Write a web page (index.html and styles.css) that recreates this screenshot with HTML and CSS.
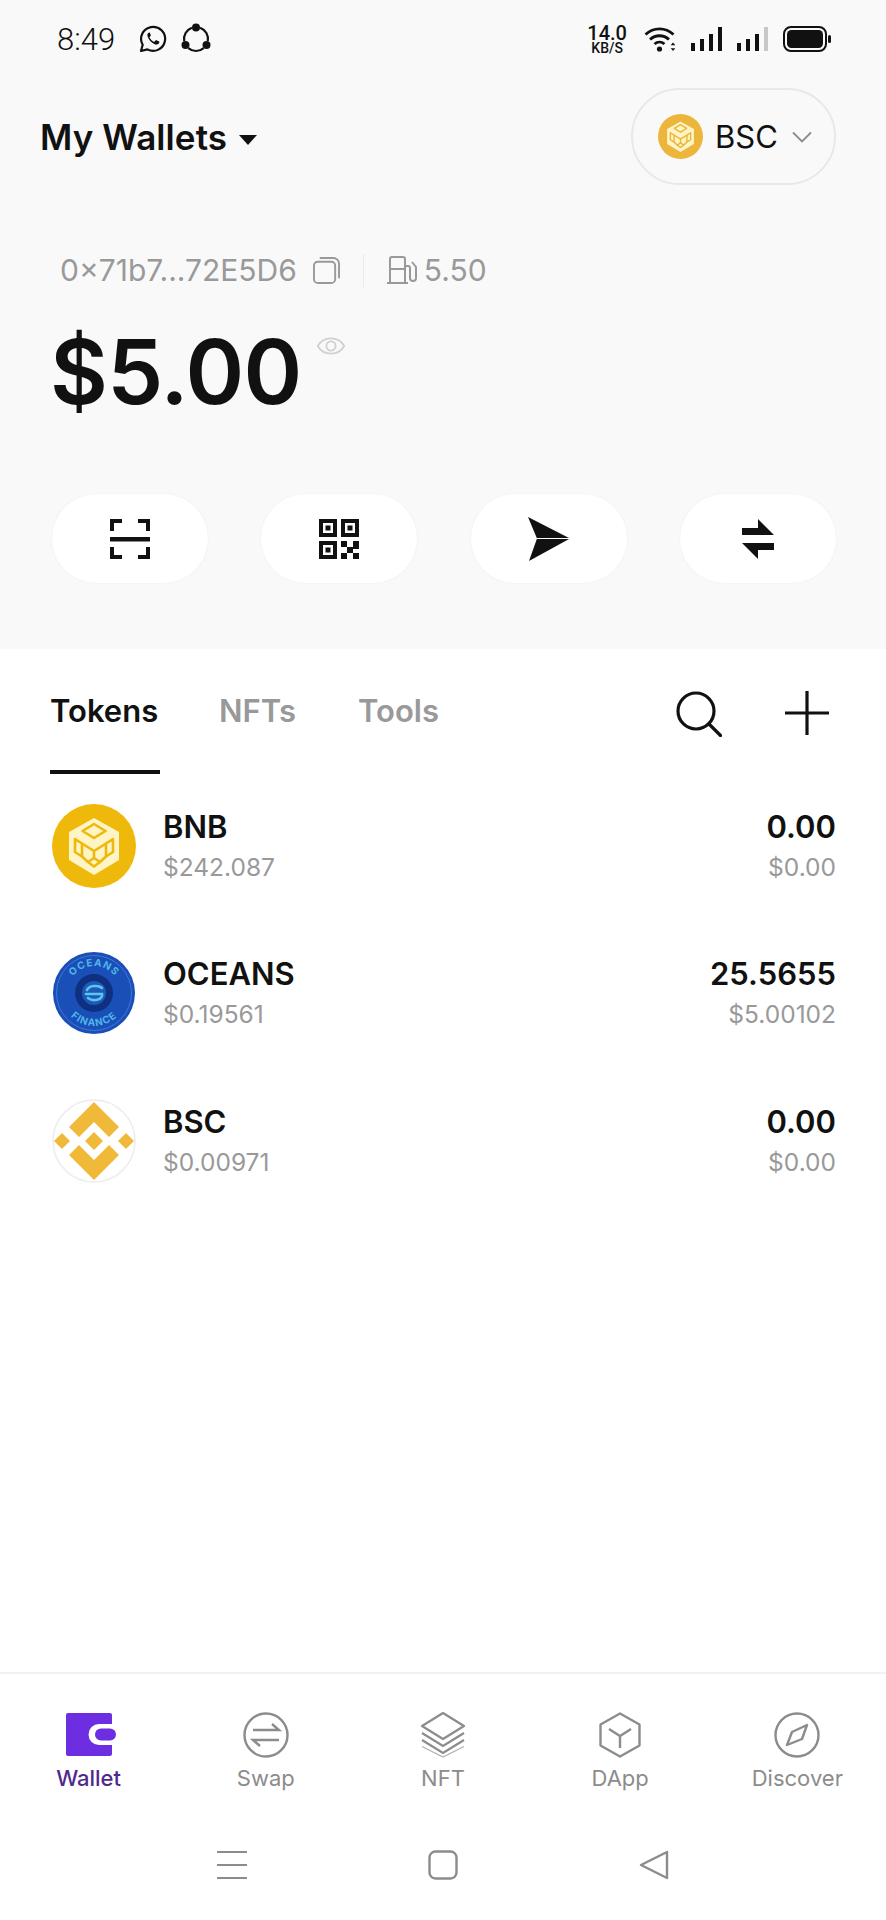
FILE: index.html
```html
<!DOCTYPE html>
<html>
<head>
    <meta charset="utf-8">
    <meta content="width=device-width, initial-scale=1" name="viewport">
    <title>My Wallets</title>
    <link rel="stylesheet" href="styles.css">
</head>
<body>
<div class="page">
    <div class="top">
        <div class="status">
            <div class="status-left">
                <span class="time">8:49</span>
                <svg class="ic-whatsapp" viewBox="0 0 28 28"><path d="M2 26l1.700-6.200A12 12 0 1 1 8.400 24.400z" fill="none" stroke="#111" stroke-width="2.200" stroke-linejoin="round"/><path d="M10 7.600c-1.400.6-2 2.200-1.400 4 1.200 3.600 4 6.400 7.600 7.800 1.800.6 3.400-.2 4-1.600.2-.6.2-1 0-1.200l-2.800-1.400c-.4-.2-.6 0-.8.200l-1 1.200c-.2.200-.4.200-.8.100-1.800-.8-3.400-2.400-4.200-4.200-.1-.3 0-.5.200-.7l.9-1.100c.2-.2.200-.5.100-.7L10.800 7.800c-.2-.3-.5-.3-.8-.2z" fill="#111"/></svg>
                <svg class="ic-share" viewBox="0 0 32 32"><path d="M20.100 4.700A12 12 0 0 1 27.800 18.100M23.700 25.200A12 12 0 0 1 8.300 25.200M4.200 18.100A12 12 0 0 1 11.900 4.700" fill="none" stroke="#111" stroke-width="2.200"/><circle cx="16" cy="4.500" r="4" fill="#111"/><circle cx="5.500" cy="22" r="4" fill="#111"/><circle cx="26.500" cy="22" r="4" fill="#111"/></svg>
            </div>
            <div class="status-right">
                <div class="speed"><span>14.0</span><span class="speed-unit">KB/S</span></div>
                <svg class="ic-wifi" viewBox="0 0 34 28"><path d="M1.500 9.500C9.500 2 21.500 2 29.500 9.500M6 14.500c5.500-5 13.500-5 19 0M10.500 19c3-2.500 7-2.500 10 0" fill="none" stroke="#111" stroke-width="2.800"/><circle cx="15.500" cy="24" r="2.600" fill="#111"/><path d="M29 17.500l2.300 2.800h-4.600zM29 26l2.300-2.800h-4.600z" fill="#111"/></svg>
                <svg class="ic-signal" viewBox="0 0 32 26"><rect x="0" y="17" width="4" height="8" fill="#111"/><rect x="9" y="13" width="4" height="12" fill="#111"/><rect x="18" y="8" width="4" height="17" fill="#111"/><rect x="27" y="1" width="4" height="24" fill="#111"/></svg>
                <svg class="ic-signal" viewBox="0 0 32 26"><rect x="0" y="17" width="4" height="8" fill="#111"/><rect x="9" y="13" width="4" height="12" fill="#111"/><rect x="18" y="8" width="4" height="17" fill="#111"/><rect x="27" y="1" width="4" height="24" fill="#c8c8c8"/></svg>
                <svg class="ic-battery" viewBox="0 0 48 26"><rect x="1" y="1" width="42" height="24" rx="7" fill="none" stroke="#111" stroke-width="2"/><rect x="4" y="4" width="36" height="18" rx="4.500" fill="#111"/><rect x="45" y="9" width="3" height="8" rx="1.500" fill="#111"/></svg>
            </div>
        </div>

        <div class="head">
            <div class="wallets">My Wallets <span class="caret"></span></div>
            <div class="chain">
                <svg class="chain-logo" viewBox="0 0 84 84"><use href="#bnb-logo"/></svg>
                <span>BSC</span>
                <svg class="chevron" viewBox="0 0 20 12"><path d="M1 1.500l9 9 9-9" fill="none" stroke="#8c8c8c" stroke-width="1.800"/></svg>
            </div>
        </div>

        <div class="address">
            <span>0×71b7...72E5D6</span>
            <svg class="ic-copy" viewBox="0 0 28 28"><rect x="1" y="5" width="22" height="22" rx="4" fill="none" stroke="#999" stroke-width="2"/><path d="M7 1h14a6 6 0 0 1 6 6v15" fill="none" stroke="#999" stroke-width="2"/></svg>
            <i class="address-line"></i>
            <svg class="ic-gas" viewBox="0 0 32 28"><path d="M3 27V3a2 2 0 0 1 2-2h11a2 2 0 0 1 2 2v24M0 27h21M3 13h15" fill="none" stroke="#999" stroke-width="2"/><path d="M18 10h3a2 2 0 0 1 2 2v10a3 3 0 0 0 6 0V11l-4-5" fill="none" stroke="#999" stroke-width="2"/></svg>
            <span class="gas">5.50</span>
        </div>

        <div class="balance">
            <span>$5.00</span>
            <svg class="ic-eye" viewBox="0 0 32 24"><path d="M1.500 12C8 1 24 1 30.500 12 24 23 8 23 1.500 12z" fill="none" stroke="#d0d0d0" stroke-width="2"/><circle cx="16" cy="12" r="5" fill="none" stroke="#d0d0d0" stroke-width="2"/></svg>
        </div>

        <div class="actions">
            <div class="action">
                <svg viewBox="0 0 40 40"><path d="M2 12V2h10M28 2h10v10M2 28v10h10M28 38h10V28" fill="none" stroke="#111" stroke-width="4"/><rect x="0" y="18" width="40" height="4.500" fill="#111"/></svg>
            </div>
            <div class="action">
                <svg viewBox="0 0 40 40"><path fill="#111" fill-rule="evenodd" d="M0 0h18v18H0zM4 4v10h10V4zM22 0h18v18H22zM26 4v10h10V4zM0 22h18v18H0zM4 26v10h10V26z"/><rect x="6.500" y="6.500" width="5" height="5" fill="#111"/><rect x="28.500" y="6.500" width="5" height="5" fill="#111"/><rect x="6.500" y="28.500" width="5" height="5" fill="#111"/><path fill="#111" d="M22 22h6v6h-6zM34 22h6v8h-6zM28 28h6v6h-6zM22 34h6v6h-6zM34 34h6v6h-6z"/></svg>
            </div>
            <div class="action">
                <svg class="ic-send" viewBox="0 0 44 46"><path d="M1 1l42 21.500L2 45l8-22.500z" fill="#111"/><path d="M10 22.500h33" stroke="#fff" stroke-width="1"/></svg>
            </div>
            <div class="action">
                <svg class="ic-swap" viewBox="0 0 34 40"><path fill="#111" d="M17 0l16 16H1V9h16zM33 24v7H17v9L1 24z"/></svg>
            </div>
        </div>
    </div>

    <div class="tabs">
        <div class="tab active">Tokens</div>
        <div class="tab">NFTs</div>
        <div class="tab">Tools</div>
        <div class="tab-tools">
            <svg class="ic-search" viewBox="0 0 46 46"><circle cx="20" cy="20" r="18" fill="none" stroke="#111" stroke-width="3.200"/><path d="M33 33l11.500 11.500" stroke="#111" stroke-width="3.200" stroke-linecap="round"/></svg>
            <svg class="ic-plus" viewBox="0 0 44 44"><path d="M22 0v44M0 22h44" stroke="#111" stroke-width="3.200"/></svg>
        </div>
    </div>

    <ul class="tokens">
        <li>
            <svg class="token-logo" viewBox="0 0 84 84">
                <g id="bnb-logo">
                    <circle class="bnb-disc" cx="42" cy="42" r="42"/>
                    <path d="M42 14l25 14v28L42 71 17 56V28z" fill="#fff4c4"/>
                    <g class="bnb-lines" fill="none" stroke-width="2.600" stroke-linejoin="round">
                        <path d="M42 20l11.500 7L42 34l-11.500-7z"/>
                        <path d="M23 35l7 4.500v13L23 48zM61 35l-7 4.500v13L61 48z"/>
                        <path d="M42 54l6 4-6 4.500-6-4.500z"/>
                        <path d="M30 39.500l12 7.500 12-7.500M42 47v7M30 52.500l6 5.500M54 52.500l-6 5.500"/>
                    </g>
                </g>
            </svg>
            <div class="token-name"><b>BNB</b><span>$242.087</span></div>
            <div class="token-value"><b>0.00</b><span>$0.00</span></div>
        </li>
        <li>
            <svg class="token-logo" viewBox="0 0 84 84">
                <defs>
                    <path id="arc-top" d="M15 42a27 27 0 0 1 54 0"/>
                    <path id="arc-bottom" d="M9 42a33 33 0 0 0 66 0"/>
                </defs>
                <circle cx="42" cy="42" r="41" fill="#1a4fb8"/>
                <circle cx="42" cy="42" r="37.500" fill="none" stroke="#3f78d8" stroke-width="1"/>
                <circle cx="42" cy="42" r="19" fill="#0f2f80"/>
                <circle cx="42" cy="42" r="12" fill="#1d5ab8"/>
                <g fill="none" stroke="#5cc4ee" stroke-width="2.600" stroke-linecap="round">
                    <path d="M35 39c2-5 12-5 15-2M34 43h16c1 6-9 8-14 4"/>
                </g>
                <text class="coin-text"><textPath href="#arc-top" startOffset="50%">OCEANS</textPath></text>
                <text class="coin-text"><textPath href="#arc-bottom" startOffset="50%">FINANCE</textPath></text>
            </svg>
            <div class="token-name"><b>OCEANS</b><span>$0.19561</span></div>
            <div class="token-value"><b>25.5655</b><span>$5.00102</span></div>
        </li>
        <li>
            <svg class="token-logo" viewBox="0 0 84 84">
                <circle cx="42" cy="42" r="41" fill="#fff" stroke="#ececec" stroke-width="1.500"/>
                <path fill="#f0b93a" d="M42 3L67 28 57 38 42 23 27 38 17 28zM42 81L17 56 27 46 42 61 57 46 67 56zM33 42l9-9 9 9-9 9zM2 42l8-8 8 8-8 8zM66 42l8-8 8 8-8 8z"/>
            </svg>
            <div class="token-name"><b>BSC</b><span>$0.00971</span></div>
            <div class="token-value"><b>0.00</b><span>$0.00</span></div>
        </li>
    </ul>

    <div class="nav">
        <div class="nav-item active">
            <svg viewBox="0 0 50 43"><path fill="#6c2ee0" d="M2 0h42a2 2 0 0 1 2 2v9H33a10.500 10.500 0 0 0 0 21h13v9a2 2 0 0 1-2 2H2a2 2 0 0 1-2-2V2a2 2 0 0 1 2-2z"/><rect x="29" y="15.500" width="21" height="12" rx="6" fill="#6c2ee0"/></svg>
            <span>Wallet</span>
        </div>
        <div class="nav-item">
            <svg viewBox="0 0 46 46"><circle cx="23" cy="23" r="21.500" fill="none" stroke="#8c8c8c" stroke-width="2.400"/><path d="M10 18h26l-7-6M36 28H10l7 6" fill="none" stroke="#8c8c8c" stroke-width="2.400"/></svg>
            <span>Swap</span>
        </div>
        <div class="nav-item">
            <svg viewBox="0 0 46 46"><path d="M23 1l21 13-21 13L2 14z" fill="none" stroke="#8c8c8c" stroke-width="2.200" stroke-linejoin="round"/><path d="M2 21l21 13 21-13M2 28l21 13 21-13" fill="none" stroke="#8c8c8c" stroke-width="2.200"/><path d="M2 34.500L23 45l21-10.500" fill="none" stroke="#b0b0b0" stroke-width="1.200"/></svg>
            <span>NFT</span>
        </div>
        <div class="nav-item">
            <svg viewBox="0 0 46 46"><path d="M23 1.500l19.500 11v21L23 44.500l-19.500-11v-21z" fill="none" stroke="#8c8c8c" stroke-width="2.400" stroke-linejoin="round"/><path d="M12 17l11 7 11-7M23 24v12" fill="none" stroke="#8c8c8c" stroke-width="2.400"/></svg>
            <span>DApp</span>
        </div>
        <div class="nav-item">
            <svg viewBox="0 0 46 46"><circle cx="23" cy="23" r="21.500" fill="none" stroke="#8c8c8c" stroke-width="2.400"/><path d="M33 13l-5 14-15 6 5-13z" fill="none" stroke="#8c8c8c" stroke-width="2.400" stroke-linejoin="round"/></svg>
            <span>Discover</span>
        </div>
    </div>

    <div class="sysnav">
        <svg viewBox="0 0 30 30"><path d="M0 2h30M0 15h30M0 28h30" stroke="#8c8c8c" stroke-width="2"/></svg>
        <svg viewBox="0 0 30 30"><rect x="1.500" y="1.500" width="27" height="27" rx="6" fill="none" stroke="#8c8c8c" stroke-width="2.400"/></svg>
        <svg viewBox="0 0 30 30"><path d="M28 2v26L2 15z" fill="none" stroke="#8c8c8c" stroke-width="2.400" stroke-linejoin="round"/></svg>
    </div>
</div>
</body>
</html>
```

FILE: styles.css
```css
* {
    box-sizing: border-box;
}

body {
    margin: 0;
    font-family: Inter, "Noto Sans", sans-serif;
    color: #111;
    background-color: #fff;
}

svg {
    display: block;
    flex: none;
}

.page {
    width: 886px;
    height: 1920px;
    overflow: hidden;
    display: flex;
    flex-direction: column;
}

/* top grey part */
.top {
    height: 649px;
    flex: none;
    padding: 0 52px;
    background-color: #f9f9f9;
}

.status {
    height: 78px;
    margin: 0 3px 0 5px;
    display: flex;
    justify-content: space-between;
    align-items: center;
}

.status-left,
.status-right {
    display: flex;
    align-items: center;
}

.time {
    font-family: Roboto, sans-serif;
    font-size: 31px;
    font-weight: 300;
}

.ic-whatsapp {
    width: 28px;
    height: 28px;
    margin-left: 24px;
}

.ic-share {
    width: 32px;
    height: 32px;
    margin-left: 13px;
}

.speed {
    margin-top: 2px;
    display: flex;
    flex-direction: column;
    align-items: center;
    font-family: Roboto, sans-serif;
    font-size: 20px;
    line-height: 17px;
    font-weight: 500;
}

.speed-unit {
    font-size: 14px;
    line-height: 13px;
}

.ic-wifi {
    width: 34px;
    height: 28px;
    margin-left: 17px;
}

.ic-signal {
    width: 32px;
    height: 26px;
    margin-left: 13px;
}

.ic-signal + .ic-signal {
    margin-left: 14px;
}

.ic-battery {
    width: 48px;
    height: 26px;
    margin-left: 14px;
}

.head {
    height: 108px;
    margin-left: -12px;
    margin-right: -2px;
    display: flex;
    justify-content: space-between;
    align-items: center;
    padding-top: 9px;
}

.wallets {
    font-size: 35px;
    font-weight: 600;
    letter-spacing: .1px;
    display: flex;
    align-items: center;
    gap: 12px;
}

.caret {
    width: 0;
    height: 0;
    margin-top: 6px;
    border-left: 9px solid transparent;
    border-right: 9px solid transparent;
    border-top: 10px solid #111;
}

.chain {
    width: 205px;
    height: 97px;
    padding-left: 25px;
    display: flex;
    align-items: center;
    border: 2px solid #e8e8e8;
    border-radius: 49px;
    font-size: 31px;
}

.chain-logo {
    width: 45px;
    height: 45px;
    margin-right: 12px;
    --bnb: #ebb63b;
}

.chevron {
    width: 20px;
    height: 12px;
    margin-left: 14px;
}

.address {
    height: 40px;
    margin-top: 64px;
    margin-left: 8px;
    display: flex;
    align-items: center;
    font-size: 30px;
    color: #999;
}

.ic-copy {
    width: 27px;
    height: 27px;
    margin-left: 16px;
}

.address-line {
    width: 1px;
    height: 33px;
    margin: 0 23px 0 23px;
    background-color: #eaeaea;
}

.ic-gas {
    width: 32px;
    height: 28px;
    margin-right: 5px;
}

.balance {
    height: 112px;
    margin-top: 25px;
    margin-left: -2px;
    display: flex;
    align-items: center;
    font-size: 89px;
    font-weight: 600;
    letter-spacing: -.7px;
}

.ic-eye {
    width: 30px;
    height: 22px;
    margin: -50px 0 0 14px;
}

.actions {
    margin-top: 67px;
    margin-right: -2px;
    display: flex;
    justify-content: space-between;
}

.action {
    width: 156px;
    height: 89px;
    display: flex;
    justify-content: center;
    align-items: center;
    background-color: #fff;
    border-radius: 45px;
    box-shadow: 0 0 2px #ececec;
}

.action svg {
    width: 40px;
    height: 40px;
}

.action .ic-send {
    width: 44px;
    height: 46px;
}

.action .ic-swap {
    width: 34px;
    height: 40px;
}

/* tabs */
.tabs {
    height: 125px;
    flex: none;
    padding: 0 57px 0 50px;
    display: flex;
}

.tab {
    height: 125px;
    padding-top: 41px;
    margin-right: 62px;
    font-size: 31px;
    line-height: 42px;
    font-weight: 600;
    color: #999;
}

.tab.active {
    width: 110px;
    margin-right: 59px;
    color: #111;
    border-bottom: 4px solid #111;
}

.tab-tools {
    margin-left: auto;
    padding-top: 42px;
    display: flex;
    gap: 63px;
}

.ic-search {
    width: 46px;
    height: 46px;
}

.ic-plus {
    width: 44px;
    height: 44px;
}

/* token list */
.tokens {
    margin: -2px 0 0;
    padding: 0 50px 0 52px;
    list-style: none;
    flex: 1;
}

.tokens li {
    height: 147.500px;
    display: flex;
    align-items: center;
}

.token-logo {
    width: 84px;
    height: 84px;
    margin-right: 27px;
}

.bnb-disc {
    fill: var(--bnb, #efb90b);
}

.bnb-lines {
    stroke: var(--bnb, #efb90b);
}

.token-name,
.token-value {
    display: flex;
    flex-direction: column;
    gap: 6px;
}

.token-value {
    margin-left: auto;
    align-items: flex-end;
}

.token-name b,
.token-value b {
    font-size: 31px;
    line-height: 36px;
    font-weight: 600;
}

.token-name span,
.token-value span {
    font-size: 24.500px;
    line-height: 32px;
    color: #999;
}

.coin-text {
    font-size: 10px;
    font-weight: 700;
    letter-spacing: 1px;
    text-anchor: middle;
    fill: #4fb4e8;
}

/* bottom nav */
.nav {
    height: 148px;
    flex: none;
    padding-top: 38px;
    display: flex;
    border-top: 2px solid #f1f1f1;
}

.nav-item {
    width: 20%;
    display: flex;
    flex-direction: column;
    align-items: center;
    font-size: 22px;
    color: #8c8c8c;
}

.nav-item svg {
    width: 46px;
    height: 46px;
}

.nav-item span {
    margin-top: 5px;
    line-height: 30px;
}

.nav-item.active {
    color: #51298c;
    font-weight: 500;
}

.nav-item.active svg {
    width: 50px;
    height: 43px;
    margin: 1px 0 2px 4px;
}

.sysnav {
    height: 100px;
    flex: none;
    padding: 30px 217px 0;
    display: flex;
    justify-content: space-between;
}

.sysnav svg {
    width: 30px;
    height: 30px;
}
```
